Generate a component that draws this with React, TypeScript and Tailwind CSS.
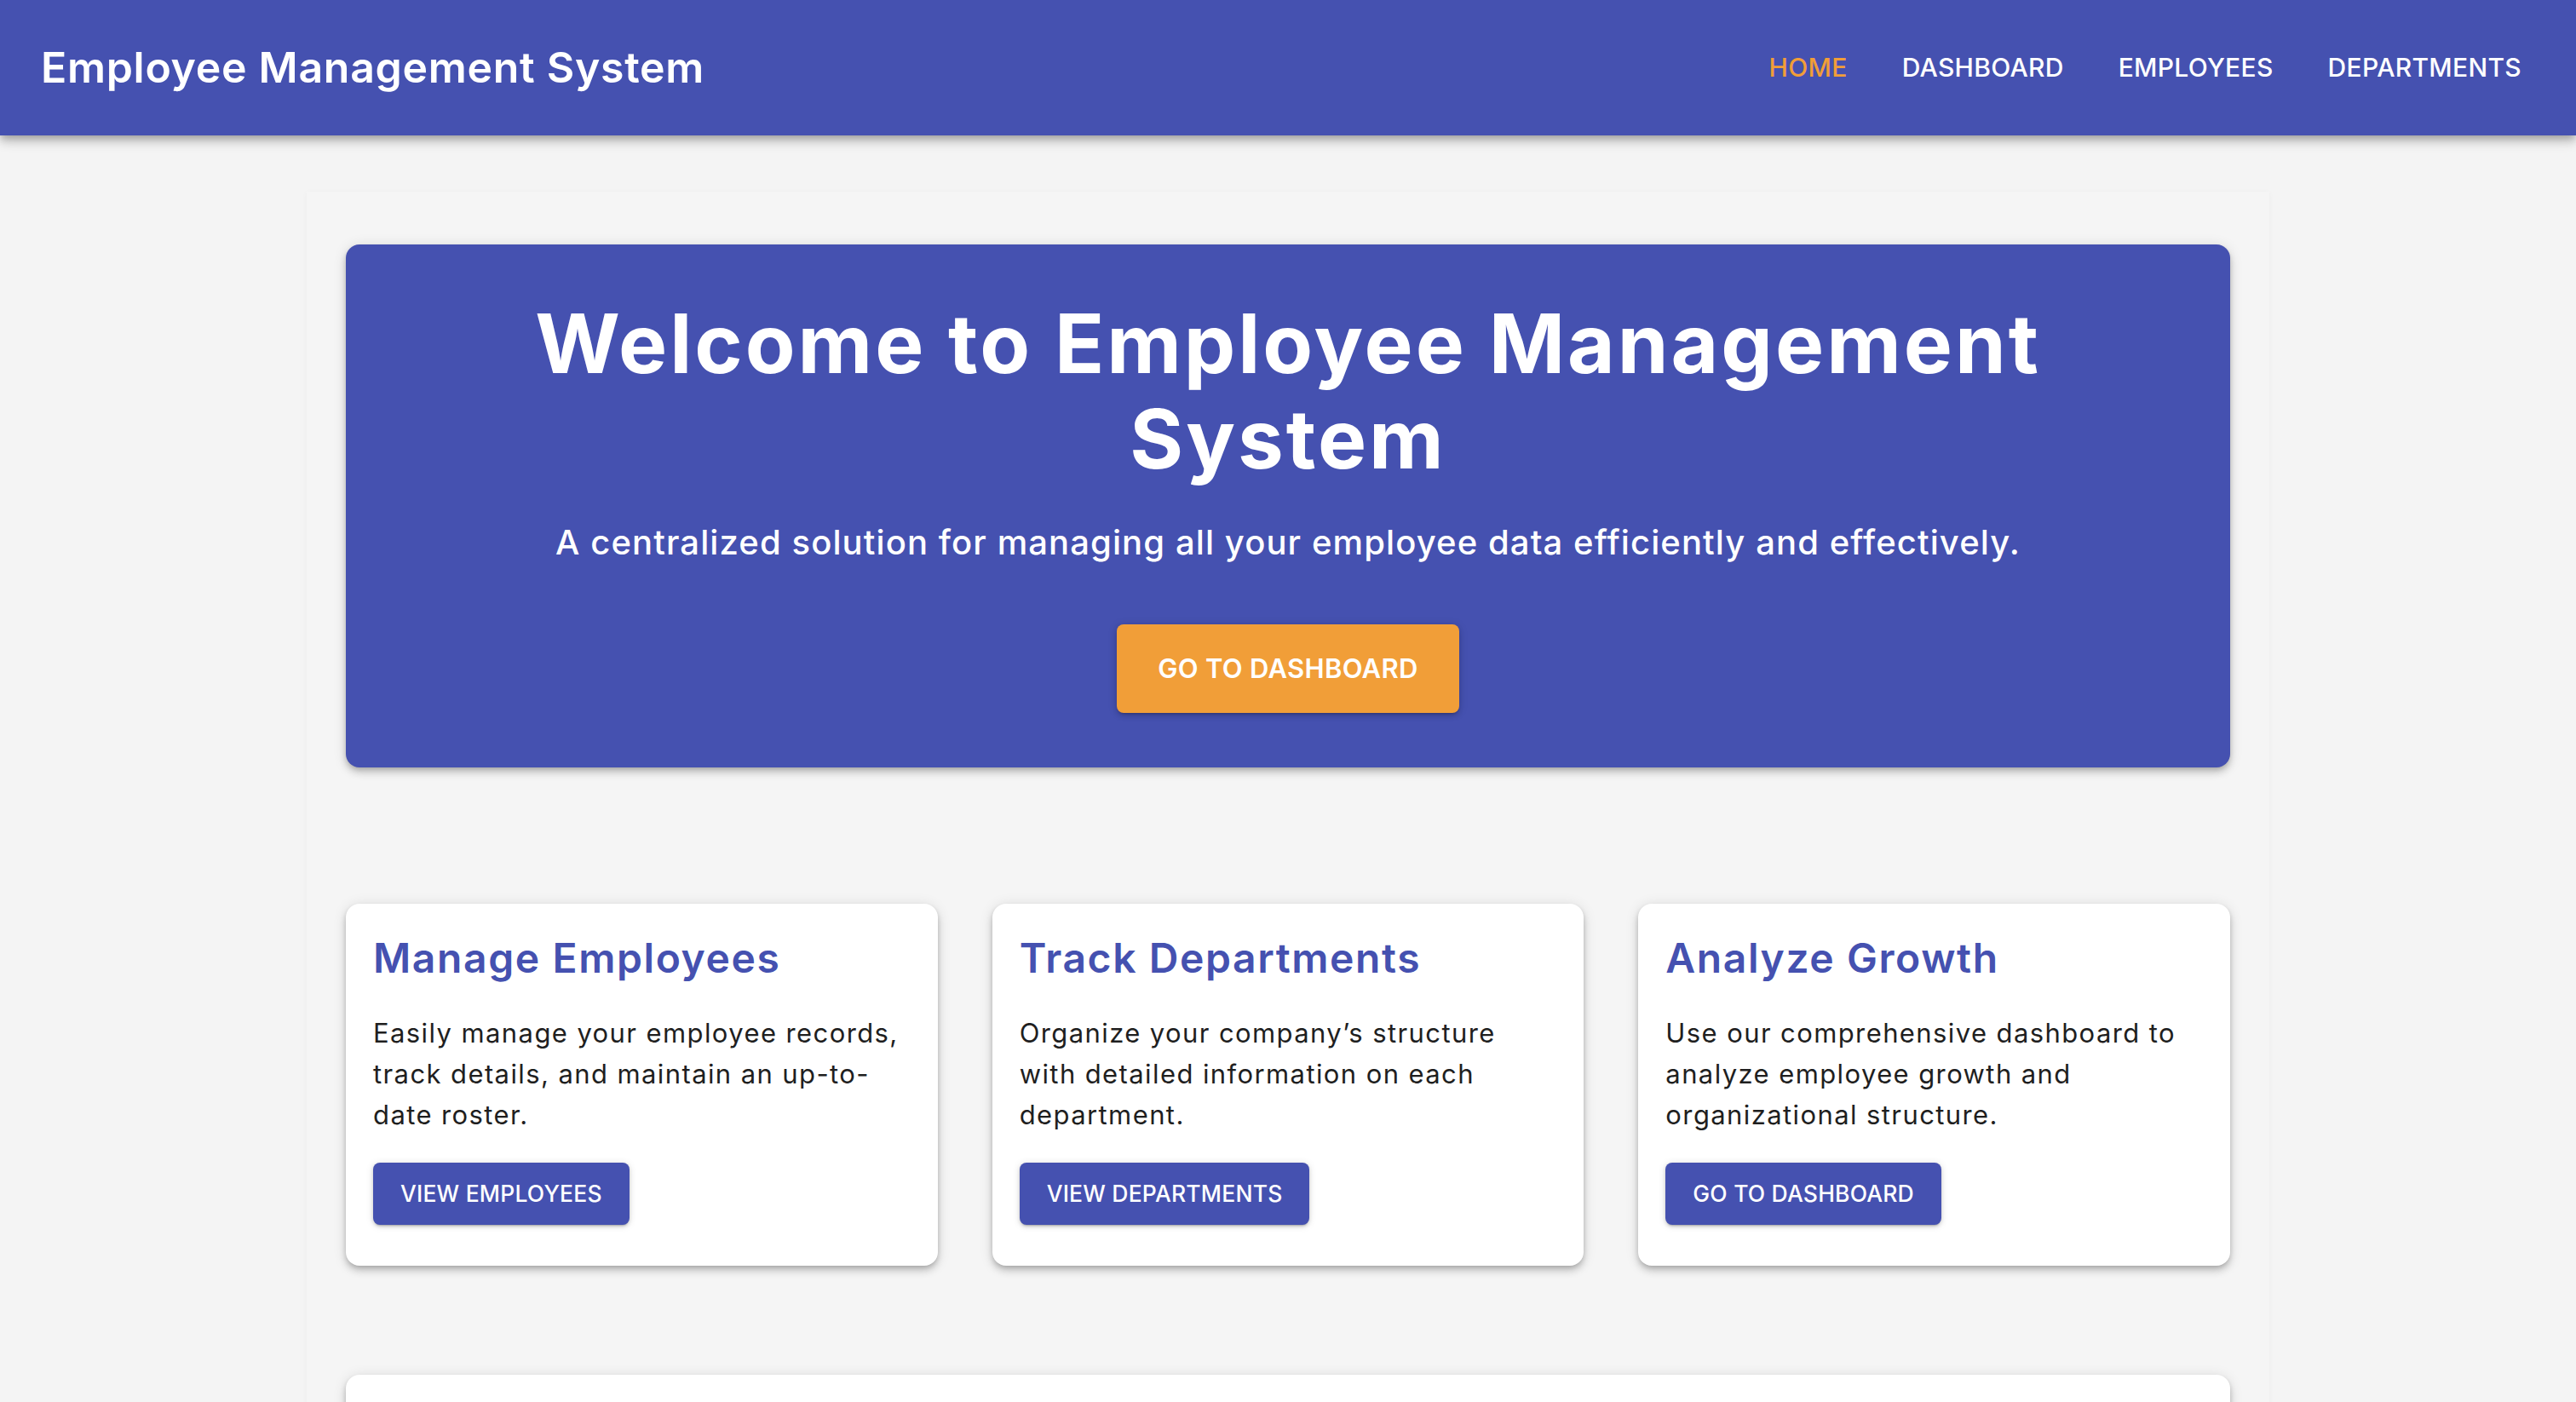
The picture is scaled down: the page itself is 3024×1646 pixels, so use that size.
import { ReactNode } from "react";

const indigo = "bg-[#4551b0]";

interface FeatureProps {
  title: string;
  children: ReactNode;
  action: string;
}

const FeatureCard = ({ title, children, action }: FeatureProps) => {
  return (
    <div className="flex-1 rounded-[16px] bg-white px-[32px] pt-[32px] pb-[48px] shadow-[0_3px_6px_-2px_rgba(0,0,0,0.2),0_6px_8px_0_rgba(0,0,0,0.14),0_2px_16px_0_rgba(0,0,0,0.12)]">
      <h2 className="text-[48px] leading-[64px] font-semibold text-[#4551b0] tracking-[1.6px]">
        {title}
      </h2>
      <p className="mt-[32px] text-[31px] leading-[48px] tracking-[1.4px] text-[#1f1f1f]">
        {children}
      </p>
      <button
        className={`mt-[32px] h-[73px] rounded-[8px] ${indigo} px-[32px] text-[26.5px] font-medium uppercase tracking-[0.2px] text-white shadow-[0_3px_2px_-2px_rgba(0,0,0,0.2),0_2px_4px_0_rgba(0,0,0,0.14),0_1px_10px_0_rgba(0,0,0,0.12)]`}
      >
        {action}
      </button>
    </div>
  );
};

const navItems = ["Home", "Dashboard", "Employees", "Departments"];

export default function App() {
  return (
    <div className="min-h-screen bg-[#f4f4f4] font-['Inter',sans-serif]">
      {/* top bar */}
      <header
        className={`relative z-10 flex h-[159px] items-center justify-between ${indigo} pl-[48px] pr-[48px] shadow-[0_4px_8px_-2px_rgba(0,0,0,0.2),0_8px_10px_0_rgba(0,0,0,0.14),0_2px_20px_0_rgba(0,0,0,0.12)]`}
      >
        <h1 className="text-[50px] font-semibold text-white tracking-[0.7px]">
          Employee Management System
        </h1>
        <nav className="flex gap-[32px]">
          {navItems.map((item, i) => (
            <a
              key={item}
              className={`px-[16px] py-[12px] text-[30px] font-medium uppercase tracking-[0.3px] ${
                i === 0 ? "text-[#f19e38]" : "text-white"
              }`}
            >
              {item}
            </a>
          ))}
        </nav>
      </header>

      <main className="mx-auto mt-[66px] w-[2304px] bg-[#f5f5f5] px-[46px] pt-[62px] pb-[48px] shadow-[0_1px_6px_0_rgba(0,0,0,0.04)]">
        {/* hero */}
        <section
          className={`flex flex-col items-center rounded-[16px] ${indigo} px-[64px] pt-[60px] pb-[64px] text-center text-white shadow-[0_3px_6px_-2px_rgba(0,0,0,0.2),0_6px_8px_0_rgba(0,0,0,0.14),0_2px_16px_0_rgba(0,0,0,0.12)]`}
        >
          <h2 className="text-[96px] leading-[112px] font-bold tracking-[3px]">
            Welcome to Employee Management
            <br />
            System
          </h2>
          <p className="mt-[34px] text-[40px] leading-[64px] font-medium tracking-[1.1px]">
            A centralized solution for managing all your employee data efficiently and
            effectively.
          </p>
          <button className="mt-[64px] h-[104px] rounded-[8px] bg-[#f19e38] px-[48px] text-[31px] font-semibold uppercase tracking-[0.3px] text-white shadow-[0_3px_3px_-2px_rgba(0,0,0,0.2),0_3px_6px_0_rgba(0,0,0,0.14),0_1px_12px_0_rgba(0,0,0,0.12)]">
            Go to Dashboard
          </button>
        </section>

        {/* features */}
        <section className="mt-[160px] flex gap-[64px]">
          <FeatureCard title="Manage Employees" action="View Employees">
            Easily manage your employee records, track details, and maintain an up-to-date
            roster.
          </FeatureCard>
          <FeatureCard title="Track Departments" action="View Departments">
            Organize your company’s structure with detailed information on each department.
          </FeatureCard>
          <FeatureCard title="Analyze Growth" action="Go to Dashboard">
            Use our comprehensive dashboard to analyze employee growth and organizational
            structure.
          </FeatureCard>
        </section>

        <section className="mt-[128px] h-[420px] rounded-[16px] bg-white shadow-[0_3px_6px_-2px_rgba(0,0,0,0.2),0_6px_8px_0_rgba(0,0,0,0.14),0_2px_16px_0_rgba(0,0,0,0.12)]" />
      </main>
    </div>
  );
}
